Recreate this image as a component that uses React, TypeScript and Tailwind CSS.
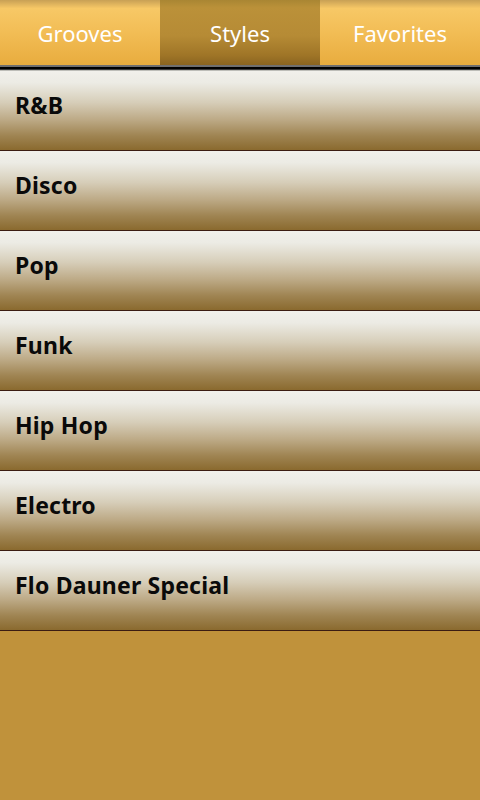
const tabs = ["Grooves", "Styles", "Favorites"];
const styles = ["R&B", "Disco", "Pop", "Funk", "Hip Hop", "Electro", "Flo Dauner Special"];

export default function App() {
  return (
    <div
      className="flex h-[800px] w-[480px] flex-col bg-[#c0923b]"
      style={{ fontFamily: '"Noto Sans", "Open Sans", sans-serif' }}
    >
      <nav className="flex h-[65px]">
        {tabs.map((tab) => (
          <TabButton key={tab} label={tab} active={tab === "Styles"} />
        ))}
      </nav>
      <div className="h-[2px] bg-[#6f6f6f]" />
      <div className="h-[2px] bg-black" />
      <div className="h-[1px] bg-[#3a3a3a]" />
      <div className="h-[1px] bg-[#bdbdb8]" />

      <ul>
        {styles.map((name) => (
          <li
            key={name}
            className="flex h-[80px] items-center border-b border-[#3b1c12] bg-[linear-gradient(to_bottom,#f1f0eb_0%,#ecebe4_15%,#d6cdb8_40%,#bca985_62%,#9f8452_82%,#8a6a2f_100%)] pb-[10px] pl-[15px]"
          >
            <span className="text-[23px] font-bold tracking-[0.2px] text-[#0a0a0a]">{name}</span>
          </li>
        ))}
      </ul>
    </div>
  );
}

function TabButton({ label, active }: { label: string; active: boolean }) {
  return (
    <button
      className={
        active
          ? "flex flex-1 items-center justify-center bg-[linear-gradient(to_bottom,#a98633_0%,#bb9139_12%,#b68b35_55%,#9f7527_85%,#8a6420_100%)] pt-[1px] text-[22px] text-white"
          : "flex flex-1 items-center justify-center bg-[linear-gradient(to_bottom,#c8a055_0%,#f7c866_13%,#f2bd55_50%,#e8ac3e_100%)] pt-[1px] text-[22px] text-white"
      }
    >
      {label}
    </button>
  );
}
